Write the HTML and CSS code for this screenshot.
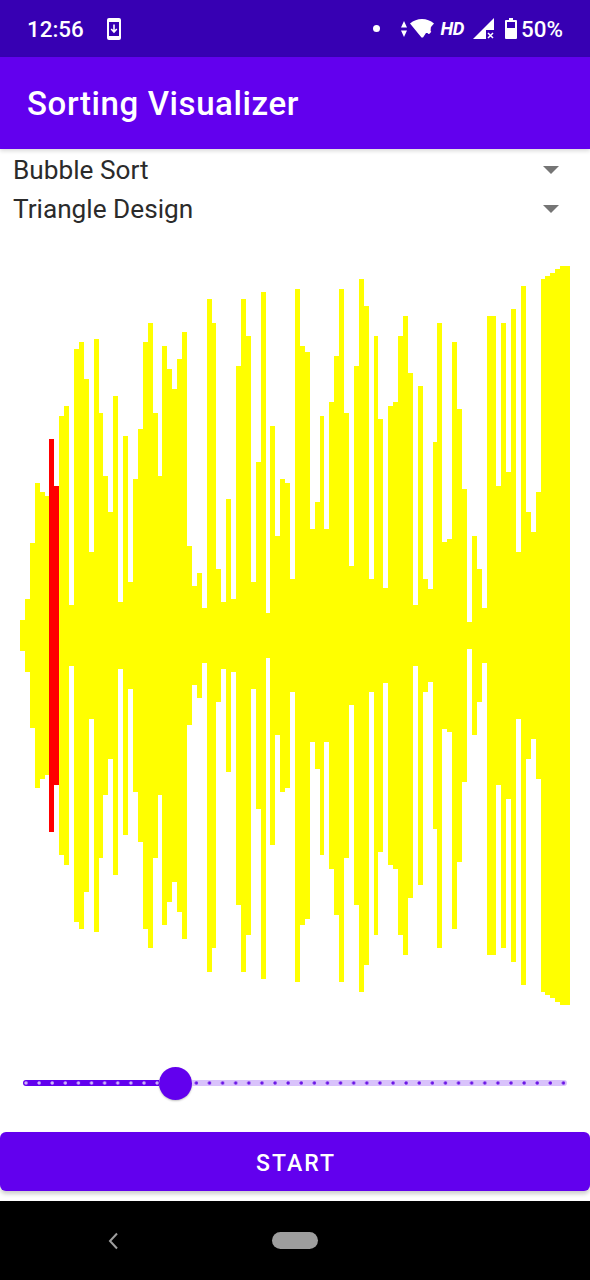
FILE: index.html
```html
<!DOCTYPE html>
<html lang="en">
<head>
    <meta charset="UTF-8">
    <meta name="viewport" content="width=device-width, initial-scale=1.0">
    <title>Sorting Visualizer</title>
    <link rel="stylesheet" href="styles.css">
</head>
<body>

    <div class="status-bar">
        <span class="clock">12:56</span>
        <svg class="icon-download" width="14" height="22" viewBox="0 0 14 22">
            <path fill="#fff" fill-rule="evenodd" d="M2 0h10a2 2 0 0 1 2 2v18a2 2 0 0 1-2 2H2a2 2 0 0 1-2-2V2a2 2 0 0 1 2-2zM2 4v14h10V4z"/>
            <path fill="none" stroke="#fff" stroke-width="1.6" d="M7 6.5v7M4.2 11 7 14l2.8-3"/>
        </svg>
        <div class="status-icons">
            <span class="dot"></span>
            <svg class="icon-arrows" width="6" height="16" viewBox="0 0 7 16" preserveAspectRatio="none">
                <path fill="#fff" d="M3.5 0 7 6.5H0zM0 9.500h7L3.500 16z"/>
            </svg>
            <svg class="icon-wifi" width="24" height="19" viewBox="0 0 24 19">
                <path fill="#fff" d="M0 4.500C3.500 1.500 7.500 0 12 0s8.500 1.500 12 4.500l-3.500 4V14H16l-3 4.500h-1.500z"/>
                <text x="15" y="15" class="wifi-four">4</text>
            </svg>
            <span class="hd">HD</span>
            <svg class="icon-signal" width="21" height="21" viewBox="0 0 21 21">
                <path fill="#fff" d="M0 21 21 0v12h-8v9z"/>
                <path fill="none" stroke="#fff" stroke-width="1.500" d="m15 15 5 5M20 15l-5 5"/>
            </svg>
            <svg class="icon-battery" width="12" height="21" viewBox="0 0 12 21">
                <path fill="#fff" fill-rule="evenodd" d="M4 0h4v2h3a1 1 0 0 1 1 1v17a1 1 0 0 1-1 1H1a1 1 0 0 1-1-1V3a1 1 0 0 1 1-1h3zM2 4v6h8V4z"/>
            </svg>
            <span class="battery-text">50%</span>
        </div>
    </div>

    <header class="app-bar">
        <h1>Sorting Visualizer</h1>
    </header>

    <div class="selects">
        <div class="select-row">
            <span>Bubble Sort</span>
            <span class="caret"></span>
        </div>
        <div class="select-row">
            <span>Triangle Design</span>
            <span class="caret"></span>
        </div>
    </div>

    <div class="chart" id="chart">
        <!-- Barras inseridas via JavaScript -->
    </div>

    <div class="slider">
        <div class="track track-active"></div>
        <div class="thumb"></div>
        <div class="track track-rest"></div>
    </div>

    <button class="start-btn">START</button>

    <nav class="nav-bar">
        <svg width="12" height="18" viewBox="0 0 12 18">
            <path fill="none" stroke="#9e9e9e" stroke-width="2" d="M10 1.500 3 9l7 7.500"/>
        </svg>
        <span class="home-pill"></span>
    </nav>

    <script>
        const alturas = [
            31, 73, 185, 305, 287, 279, 393, 299, 439, 459,
            61, 573, 587, 513, 167, 593, 445, 319, 247, 479,
            67, 399, 107, 313, 413, 587, 625, 445, 319, 579,
            533, 493, 553, 607, 179, 99, 125, 55, 673, 625,
            133, 67, 273, 73, 539, 673, 599, 107, 347, 687,
            45, 419, 199, 313, 305, 113, 693, 579, 567, 213,
            267, 439, 213, 467, 559, 693, 445, 139, 539, 713,
            659, 113, 599, 433, 95, 459, 467, 599, 639, 525,
            61, 499, 113, 93, 387, 625, 187, 193, 587, 453,
            293, 27, 199, 133, 55, 639, 639, 299, 625, 327,
            653, 167, 699, 247, 207, 287, 713, 719, 725, 733,
            739, 739
        ];
        const ativos = [6, 7];
        const passo = 550 / alturas.length;

        const chart = document.getElementById('chart');
        alturas.forEach((altura, i) => {
            const barra = document.createElement('div');
            barra.className = ativos.includes(i) ? 'bar bar-active' : 'bar';
            barra.style.width = (Math.round(passo * (i + 1)) - Math.round(passo * i)) + 'px';
            barra.style.height = altura + 'px';
            chart.appendChild(barra);
        });
    </script>

</body>
</html>
```

FILE: styles.css
```css
body {
    font-family: Roboto, "Liberation Sans", sans-serif;
    background-color: #fff;
    margin: 0;
    height: 1280px;
    overflow: hidden;
}

/* Barra de status */
.status-bar {
    height: 57px;
    background-color: #3700b3;
    color: #fff;
    display: flex;
    align-items: center;
    padding: 0 27px;
    box-sizing: border-box;
}
.clock {
    font-size: 22.4px;
    font-weight: 500;
}
.icon-download {
    margin-left: 23px;
}
.status-icons {
    margin-left: auto;
    display: flex;
    align-items: center;
}
.dot {
    width: 7px;
    height: 7px;
    border-radius: 50%;
    background-color: #fff;
    margin-right: 21px;
}
.icon-wifi {
    margin-left: 3px;
}
.wifi-four {
    font-size: 11px;
    font-style: italic;
    font-weight: 700;
    fill: #fff;
}
.hd {
    font-size: 18.5px;
    font-weight: 700;
    font-style: italic;
    letter-spacing: -0.4px;
    margin-left: 7px;
}
.icon-signal {
    margin-left: 9px;
}
.icon-battery {
    margin-left: 11px;
}
.battery-text {
    font-size: 22.4px;
    font-weight: 500;
    margin-left: 4px;
}

/* Barra do app */
.app-bar {
    height: 92px;
    background-color: #6200ee;
    display: flex;
    align-items: center;
    padding-left: 27px;
    box-shadow: 0 2px 4px rgba(0, 0, 0, 0.15);
    position: relative;
}
.app-bar h1 {
    margin: 0;
    color: #fff;
    font-size: 33px;
    font-weight: 500;
    letter-spacing: 0.6px;
}

/* Selects */
.selects {
    padding-top: 1px;
}
.select-row {
    height: 40px;
    display: flex;
    align-items: center;
    justify-content: space-between;
    padding: 0 31px 0 13px;
    font-size: 26.2px;
    color: #2b2b2b;
}
.select-row + .select-row {
    height: 38px;
    margin-bottom: 2px;
}
.caret {
    width: 0;
    height: 0;
    border-left: 8.5px solid transparent;
    border-right: 8.5px solid transparent;
    border-top: 8.5px solid #757575;
}

/* Grafico */
.chart {
    height: 811px;
    padding: 0 20px;
    display: flex;
    align-items: center;
}
.bar {
    flex: none;
    background-color: #ffff00;
}
.bar-active {
    background-color: #ff0000;
}

/* Slider */
.slider {
    height: 84px;
    padding: 0 23px;
    display: flex;
    align-items: center;
}
.track {
    height: 6px;
    background-size: 13.11px 6px;
    background-repeat: repeat-x;
}
.track-active {
    width: 136px;
    flex-shrink: 0;
    border-radius: 3px 0 0 3px;
    background-color: #6200ee;
    background-image: radial-gradient(circle at 3px 3px, #d0b8f8 1.1px, transparent 2.2px);
}
.track-rest {
    flex: 1;
    border-radius: 0 3px 3px 0;
    background-color: #d9c2fb;
    background-position: 1.4px 0;
    background-image: radial-gradient(circle at 3px 3px, #6a14e6 1.1px, transparent 2.2px);
}
.thumb {
    width: 33px;
    height: 33px;
    flex-shrink: 0;
    border-radius: 50%;
    background-color: #6200ee;
    box-shadow: 0 1px 2px rgba(0, 0, 0, 0.25);
}

/* Botao */
.start-btn {
    display: block;
    width: 100%;
    height: 59px;
    margin-top: 7px;
    padding: 4px 0 0 2px;
    border: none;
    border-radius: 6px;
    background-color: #6200ee;
    color: #fff;
    font-family: Roboto, "Liberation Sans", sans-serif;
    font-size: 23px;
    font-weight: 500;
    letter-spacing: 2.05px;
    box-shadow: 0 3px 4px rgba(0, 0, 0, 0.2);
}

/* Barra de navegacao */
.nav-bar {
    height: 79px;
    margin-top: 10px;
    background-color: #000;
    display: flex;
    align-items: center;
    padding-left: 107px;
}
.home-pill {
    width: 46px;
    height: 17px;
    margin-left: 153px;
    border-radius: 9px;
    background-color: #9e9e9e;
}
```
